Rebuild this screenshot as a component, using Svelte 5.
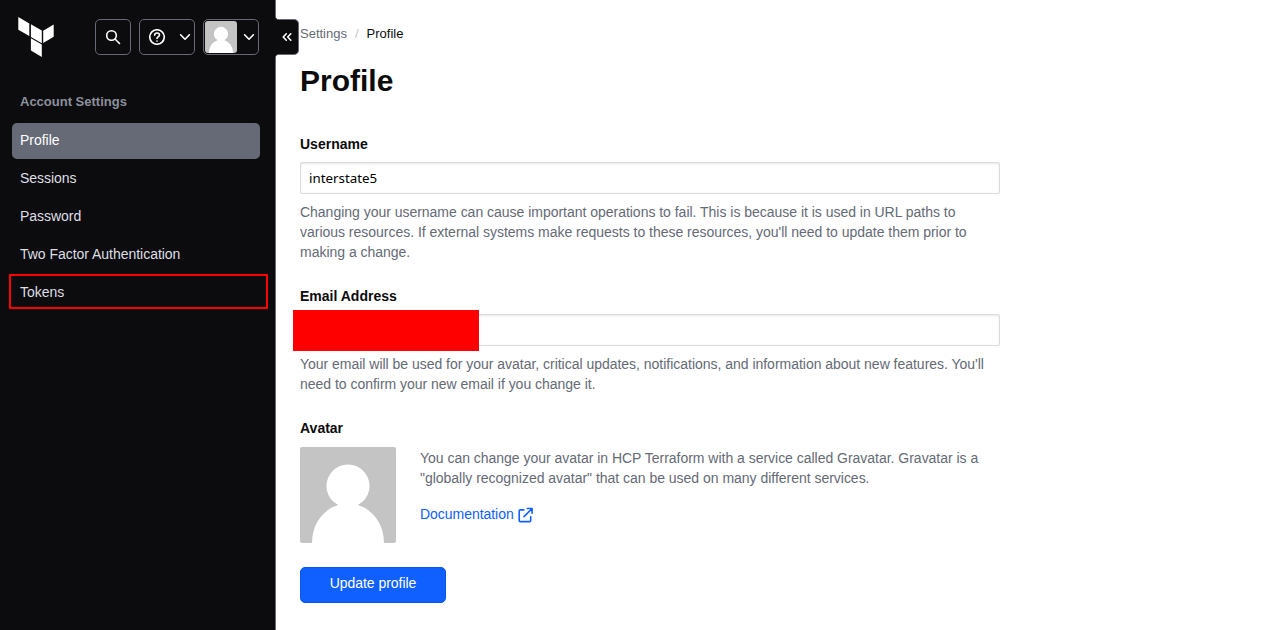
<script>
	const navItems = ['Profile', 'Sessions', 'Password', 'Two Factor Authentication', 'Tokens'];

	let current = $state('Profile');
	let username = $state('interstate5');
	let email = $state('');
</script>

{#snippet avatar()}
	<svg class="avatar" viewBox="0 0 96 96" aria-hidden="true">
		<rect width="96" height="96" fill="#c4c4c4" />
		<path
			fill="#fff"
			d="M38.2 58.1a21.5 21.5 0 1 1 19.6 0C73 62.5 84 77 84 96H12c0-19 11-33.5 26.2-37.9z"
		/>
	</svg>
{/snippet}

{#snippet chevron()}
	<svg class="icon" viewBox="0 0 16 16" aria-hidden="true">
		<path d="M3.6 5.8 8 10.2l4.4-4.4" />
	</svg>
{/snippet}

<div class="layout">
	<aside>
		<header>
			<svg class="logo" viewBox="0 0 36 40" aria-label="HCP Terraform">
				<path
					d="M.3 0l11 6.4v12.7L.3 12.7zM12.9 7.3l10.9 6.3v12.6l-10.9-6.3zM25.2 13.7l10.5-6.3v12.4l-10.5 6.3zM12.9 21.3l10.9 6.3v12.3l-10.9-6.3z"
				/>
			</svg>
			<div class="actions">
				<button class="square" aria-label="Search">
					<svg class="icon" viewBox="0 0 16 16">
						<circle cx="6.5" cy="6.5" r="4.8" />
						<path d="m10 10 4.5 4.5" />
					</svg>
				</button>
				<button class="menu" aria-label="Help">
					<svg class="icon" viewBox="0 0 16 16">
						<circle cx="8" cy="8" r="7.25" />
						<path d="M5.6 6.1A2.4 2.4 0 0 1 8 4c1.5 0 2.5.9 2.5 2.1C10.5 7.7 8 7.9 8 9.4" />
						<path d="M8 12v.1" />
					</svg>
					{@render chevron()}
				</button>
				<button class="menu user" aria-label="User menu">
					{@render avatar()}
					{@render chevron()}
				</button>
			</div>
		</header>

		<nav>
			<h2>Account Settings</h2>
			{#each navItems as item}
				<button
					class:active={current === item}
					class:outlined={item === 'Tokens'}
					onclick={() => (current = item)}
				>
					{item}
				</button>
			{/each}
		</nav>

		<button class="toggle" aria-label="Close menu">
			<svg class="icon" viewBox="0 0 16 16">
				<path d="M7.3 4.8 4.2 8l3.1 3.2M11.8 4.8 8.7 8l3.1 3.2" />
			</svg>
		</button>
	</aside>

	<main>
		<div class="breadcrumb">
			<a href="#settings">Settings</a>
			<span class="slash">/</span>
			<span>Profile</span>
		</div>

		<h1>Profile</h1>

		<form onsubmit={(e) => e.preventDefault()}>
			<div class="field">
				<label for="username">Username</label>
				<input id="username" type="text" bind:value={username} spellcheck="false" />
				<p>
					Changing your username can cause important operations to fail. This is because it is used
					in URL paths to<br />
					various resources. If external systems make requests to these resources, you'll need to
					update them prior to<br />
					making a change.
				</p>
			</div>

			<div class="field">
				<label for="email">Email Address</label>
				<div class="redacted">
					<input id="email" type="text" bind:value={email} />
				</div>
				<p>
					Your email will be used for your avatar, critical updates, notifications, and information
					about new features. You'll<br />
					need to confirm your new email if you change it.
				</p>
			</div>

			<div class="field last">
				<strong>Avatar</strong>
				<div class="gravatar">
					{@render avatar()}
					<div>
						<p>
							You can change your avatar in HCP Terraform with a service called Gravatar. Gravatar
							is a<br />
							"globally recognized avatar" that can be used on many different services.
						</p>
						<a href="#documentation">
							Documentation
							<svg class="icon" viewBox="0 0 16 16" aria-hidden="true">
								<path d="M5.8 2.9H2.4c-.7 0-1.2.5-1.2 1.2v9.3c0 .7.5 1.2 1.2 1.2h9.1c.7 0 1.2-.5 1.2-1.2V9.8" />
								<path d="M9.3 1.5h4.8v4.8M13.9 1.7 6 9.6" />
							</svg>
						</a>
					</div>
				</div>
			</div>

			<button class="primary">Update profile</button>
		</form>
	</main>
</div>

<style>
	:global(body) {
		margin: 0;
		background: #fff;
	}

	.layout {
		display: flex;
		height: 630px;
		overflow: hidden;
		color: #0c0c0e;
		font: 14px/20px 'Liberation Sans', Arial, sans-serif;
	}

	.layout * {
		box-sizing: border-box;
	}

	button {
		font: inherit;
		cursor: pointer;
	}

	.icon {
		display: block;
		flex: none;
		width: 16px;
		height: 16px;
		fill: none;
		stroke: currentColor;
		stroke-width: 1.6;
		stroke-linecap: round;
		stroke-linejoin: round;
	}

	aside {
		position: relative;
		flex: none;
		width: 276px;
		background: #0c0c0e;
		border-right: 1px solid #656a76;

		& header {
			display: flex;
			justify-content: space-between;
			padding: 17px 16px 0 18px;
		}
	}

	.logo {
		width: 36px;
		height: 40px;
		fill: #fff;
	}

	.actions {
		display: flex;
		gap: 8px;
		padding-top: 2px;

		& button {
			display: flex;
			align-items: center;
			justify-content: space-between;
			height: 36px;
			padding: 0 1px 0 9px;
			color: #fff;
			background: #0c0c0e;
			border: 1px solid #656a76;
			border-radius: 5px;
		}

		& .square {
			width: 36px;
		}

		& .menu {
			width: 56px;
		}

		& .user {
			padding-left: 1px;
		}

		& .avatar {
			width: 32px;
			height: 32px;
			border-radius: 3px;
		}
	}

	nav {
		display: flex;
		flex-direction: column;
		gap: 2px;
		padding: 35px 15px 0 12px;

		& h2 {
			margin: 0 0 10px;
			padding: 0 8px;
			color: #8c909c;
			font-size: 13px;
			line-height: 19px;
		}

		& button {
			height: 36px;
			padding: 0 8px 2px;
			color: #dedfe3;
			letter-spacing: -0.03px;
			text-align: left;
			background: none;
			border: 0;
			border-radius: 5px;
		}

		& .active {
			color: #fff;
			background: #656a76;
		}

		& .outlined {
			height: 35px;
			margin: -1px -8px 0 -3px;
			padding: 0 9px;
			border: 2px solid #f00;
			border-radius: 0;
		}
	}

	/* hangs over the right edge of the sidebar */
	.toggle {
		position: absolute;
		top: 19px;
		right: -24px;
		width: 24px;
		height: 36px;
		padding: 0 0 0 4px;
		color: #fff;
		background: #0c0c0e;
		border: 1px solid #656a76;
		border-left: 0;
		border-radius: 0 5px 5px 0;

		/* rounded inner corners where the tab meets the sidebar */
		&::before,
		&::after {
			content: '';
			position: absolute;
			left: 0;
			width: 4px;
			height: 4px;
		}

		&::before {
			top: -4px;
			background: radial-gradient(circle at 100% 0, transparent 3px, #656a76 3.5px, #0c0c0e 4.5px);
		}

		&::after {
			bottom: -4px;
			background: radial-gradient(circle at 100% 100%, transparent 3px, #656a76 3.5px, #0c0c0e 4.5px);
		}
	}

	main {
		width: 724px;
		padding: 24px 0 0 24px;
	}

	.breadcrumb {
		display: flex;
		gap: 8px;
		font-size: 13px;

		& a {
			color: #656a76;
			text-decoration: none;
		}

		& .slash {
			color: #c2c5cb;
		}
	}

	h1 {
		margin: 19px 0 35px;
		font-size: 30px;
		line-height: 36px;
	}

	.field {
		margin-bottom: 24px;

		& label,
		& strong {
			display: block;
			margin-bottom: 8px;
			font-weight: bold;
		}

		& input {
			display: block;
			width: 100%;
			height: 32px;
			padding: 0 8px 1px;
			color: #000;
			font: 13.333px 'Noto Sans', sans-serif;
			background: #fff;
			border: 1px solid #dbdbdc;
			border-radius: 2px;
			box-shadow: inset 0 1px 2px rgba(101, 106, 118, 0.15);
			outline: 0;
		}

		& p {
			margin: 8px 0 0;
			color: #656a76;
			letter-spacing: -0.02px;
			white-space: nowrap;
		}
	}

	.last {
		& strong {
			margin-bottom: 9px;
		}
	}

	.redacted {
		position: relative;

		&::before {
			content: '';
			position: absolute;
			top: -4px;
			left: -7px;
			width: 186px;
			height: 41px;
			background: #f00;
		}
	}

	.gravatar {
		display: flex;
		gap: 24px;

		& .avatar {
			flex: none;
			width: 96px;
			height: 96px;
			border-radius: 2px;
		}

		& p {
			margin: 1px 0 16px;
		}

		& a {
			display: flex;
			align-items: center;
			gap: 4px;
			color: #1060ff;
			letter-spacing: -0.04px;
			text-decoration: none;
		}

		& a .icon {
			margin-top: 2px;
		}
	}

	.primary {
		width: 146px;
		height: 36px;
		padding: 0 0 4px;
		color: #fff;
		letter-spacing: -0.04px;
		background: #1060ff;
		border: 1px solid #0c56e9;
		border-radius: 5px;
	}
</style>
